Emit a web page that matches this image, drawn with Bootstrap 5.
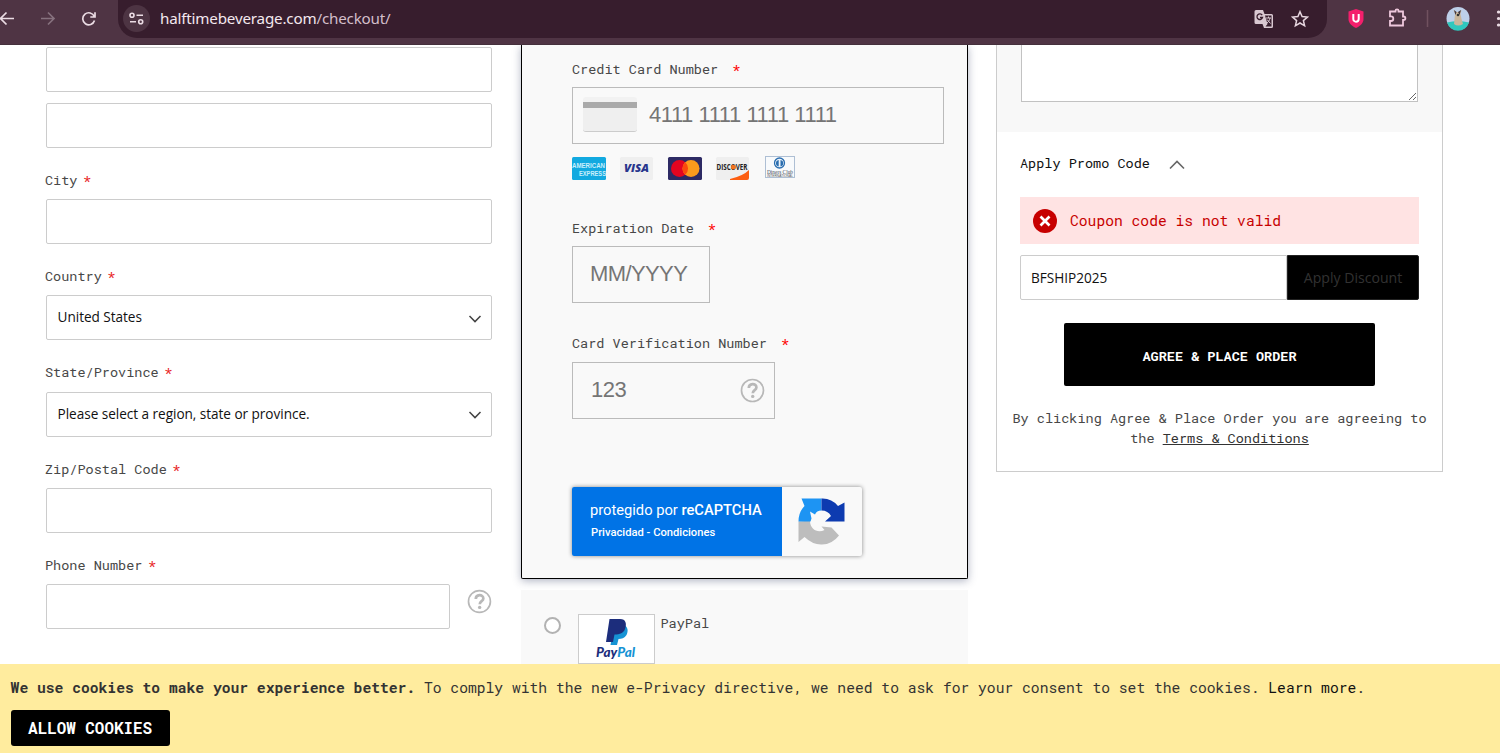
<!DOCTYPE html>
<html lang="en">
<head>
<meta charset="utf-8">
<meta name="viewport" content="width=device-width, initial-scale=1">
<title>Checkout</title>
<link href="https://cdn.jsdelivr.net/npm/bootstrap@5.3.0/dist/css/bootstrap.min.css" rel="stylesheet">
<style>
:root { --mono: "Roboto Mono", "DejaVu Sans Mono", "Liberation Mono", monospace; --sans: "Open Sans", "Noto Sans", sans-serif; }
body { font: 13.54px/20px var(--mono); color: #484848; background: #fff; height: 753px; overflow: hidden; }
.chrome { height: 45px; background: #4f3444; border-bottom: 1px solid #45303c; padding-bottom: 7px; color: #ecdde5; }
.omnibox { position: relative; width: 1209px; height: 38px; margin-left: 21px; background: #371d2d; border-radius: 0 0 19px 19px; padding-left: 5px; }
.site-info { width: 27px; height: 27px; border-radius: 50%; background: #4d3443; }
.address { font: 15.2px/20px "Noto Sans", sans-serif; letter-spacing: -.19px; color: #f3e8ee; margin-left: 10px; padding-bottom: 1px; }
.address span { color: #d3bfca; }
.page { height: 708px; display: grid; grid-template-columns: 447px 447px 447px; column-gap: 28.5px; padding-left: 45px; overflow: hidden; align-items: start; }
.form-control, .form-select { height: 45px; border: 1px solid #ccc; border-radius: 2px; font: 13.6px/20px var(--sans); color: #111; padding: 0 11px; }
.form-select { background-size: 14px 14px; background-position: right 9px center; padding-bottom: 1px; letter-spacing: -.04px;
  background-image: url("data:image/svg+xml,%3csvg xmlns='http://www.w3.org/2000/svg' viewBox='0 0 14 14'%3e%3cpath fill='none' stroke='%23444' stroke-width='1.5' d='m1.5 5 5.5 5.6L12.5 5'/%3e%3c/svg%3e"); }
.address-form .form-control, .address-form .form-select { margin-left: .6px; width: 446px; }
.field { padding-top: 22px; }
.form-label { display: block; margin: 0 0 8px; height: 20px; }
.address-form .form-label { margin-bottom: 9.25px; }
.req { color: #e8251f; margin-left: 5.500px; }
.pay .req { margin-left: 14px; color: #f00; }
.pay { background: #f9f9f9; border: 1px solid #000; border-top: 0; border-radius: 0 0 2px 2px; height: 534px; padding: 13.500px 23px 0 50.5px; box-shadow: 0 2px 9px rgba(50,60,100,.38); }
.pay .form-label { margin-bottom: 8.500px; }
.pay .form-control, .cardbox { height: 57px; border: 1px solid #bbb; border-radius: 0; background: #f9f9f9; font: 22px/28px "Liberation Sans", Arial, sans-serif; color: #777; letter-spacing: -.6px; }
.pay .form-control { padding-bottom: 1px; }
.form-control::placeholder { color: #757575; opacity: 1; }
.cardbox input { all: unset; font: 22px/28px "Liberation Sans", Arial, sans-serif; width: 270px; margin-left: 12px; letter-spacing: -.45px; padding-bottom: 1px; }
.cardart { width: 54px; height: 35px; margin-top: -3px; border-radius: 3px; background: linear-gradient(#f2f2f2 5px, #aaa 5px, #aaa 11px, #efefef 11px); border-bottom: 1px solid #ccc; }
.captcha { width: 290px; height: 69px; margin-top: 68px; background: #f9f9f9; box-shadow: 0 0 4px #888; font-family: Roboto, sans-serif; border-radius: 2px; overflow: hidden; }
.captcha-text { width: 210px; background: #0073e6; color: #fff; padding: 13px 0 0 18px; }
.paypal { background: #f9f9f9; height: 90px; margin-top: 11px; padding: 24px 0 0 23px; }
.paypal .form-check-input { width: 17px; height: 17px; margin: 3px 17px 0 1px; border: 2px solid #b2b2b2; }
.logo-tile { width: 77px; height: 50px; border: 1px solid #ccc; background: #fff; }
.summary { border: 1px solid #ccc; border-top: 0; height: 427px; }
.comments { background: #f8f8f8; height: 87px; padding: 0 24px; }
.comments textarea { height: 57px; min-height: 0; border-top: 0; border-radius: 0; border-color: #c2c2c2; resize: vertical; }
.error-note { height: 47px; background: #ffe3e3; color: #c70000; font-size: 14.67px; margin-top: 24px; padding-left: 12px; }
.promo .btn { width: 132px; background: #000; color: #323232; border-radius: 0 2px 2px 0; font: 14.1px/20px var(--sans); opacity: 1; border: 1px solid #222; padding: 0; }
.place { width: 311px; height: 63px; margin: 23px auto 0; background: #000; color: #fff; border-radius: 2px; font: bold 13.52px/20px var(--mono); display: block; border: 0; padding-top: 4px; }
.cookies { height: 89px; background: #ffec9e; padding: 14px 10px 0 10.600px; font-size: 14.66px; color: #333; }
.allow { width: 159px; height: 36px; margin-top: 12px; padding: 0; background: #000; color: #fff; border-radius: 3px; font: bold 15.9px/20px var(--mono); border: 0; }
</style>
</head>
<body>
<header class="chrome d-flex align-items-center">
  <svg width="97" height="38" fill="none" stroke="#ebdce4" stroke-width="1.700"><path d="M14 18.500H1M6.500 12.500l-6 6 6 6"/><path stroke="#86717e" d="M41 18.500h13M48 12.500l6 6-6 6"/><path d="M94.300 16.500a6 6 0 1 0 .2 4M95 12.300v4.700h-4.700"/></svg>
  <div class="omnibox d-flex align-items-center">
    <div class="site-info d-flex align-items-center justify-content-center flex-shrink-0"><svg width="15" height="13" fill="none" stroke="#ebdce4" stroke-width="1.600"><circle cx="3" cy="3.300" r="2"/><path d="M7.500 3.300H14M1 9.700h6"/><circle cx="11.700" cy="9.700" r="2"/></svg></div>
    <div class="address flex-grow-1">halftimebeverage.com<span>/checkout/</span></div>
    <svg style="margin-right:17px" width="20" height="20" viewBox="0 0 20 20"><path fill="#d9c8d1" d="M2 1h7l1.500 4h7A1.500 1.500 0 0 1 19 6.500v11a1.500 1.500 0 0 1-1.500 1.500H10l-1.500-4H2A1.500 1.500 0 0 1 .5 13.500v-11A1.500 1.500 0 0 1 2 1z"/><path fill="#371d2d" d="M11 6.500h6.500v11h-6l2-2.500z"/><path d="M8.200 6.200a2.800 2.800 0 1 0 .3 2.300H6" fill="none" stroke="#371d2d" stroke-width="1.300"/><path d="M12 9h5M14.500 7.500V9M16 9c-.5 2.500-1.700 4-3 5M13 10.500l3.500 4" fill="none" stroke="#d9c8d1"/></svg>
    <svg style="margin-right:18px" width="18" height="18" viewBox="0 0 18 18"><path d="m9 1.700 2.100 4.900 5.300.5-4 3.500 1.200 5.200L9 13l-4.600 2.800 1.200-5.200-4-3.500 5.300-.5z" fill="none" stroke="#e6d6df" stroke-width="1.500"/></svg>
  </div>
  <svg width="173" height="38"><path fill="#f41f6c" d="m29 9 7.500 2.500v7.500c0 4-3 7-7.500 9-4.500-2-7.500-5-7.500-9v-7.500z"/><path d="M26.300 14v5a2.700 2.700 0 0 0 5.400 0v-5" fill="none" stroke="#fff" stroke-width="2"/><path d="M63 11.500h5.500V10.800a1.500 1.500 0 0 1 3 0v.7H76v5h.7a1.500 1.500 0 0 1 0 3.400H76v5.600H63V21h1a2.300 2.300 0 0 0 0-4.600h-1z" fill="none" stroke="#efc8dd" stroke-width="1.800"/><path stroke="#70515f" stroke-width="1.500" d="M100.500 10v17"/><circle cx="131" cy="18.500" r="11.500" fill="#bdcfe9"/><path d="M120 22.500q11-3 22 0a11.500 11.500 0 0 1-22 0z" fill="#2fc7bd"/><path d="M127 24l1-10-1.500-4 3 2h2l3-2-1 4 1 5 1.500 5q-5 3-9 0z" fill="#c9b69b"/><path d="m127 10 2.500 2-1 3zm7 0-3 2 1.500 3z" fill="#3e3540"/><circle cx="131" cy="15" r="1.300" fill="#333"/><circle cx="171.500" cy="12" r="1.600" fill="#ebdce4"/><circle cx="171.500" cy="18.500" r="1.600" fill="#ebdce4"/><circle cx="171.500" cy="25" r="1.600" fill="#ebdce4"/></svg>
</header>

<main class="page">
  <form class="address-form">
    <div style="padding-top:2px"><input class="form-control" aria-label="Street address line 1"></div>
    <div style="padding-top:10.75px"><input class="form-control" aria-label="Street address line 2"></div>
    <div class="field"><label class="form-label">City<span class="req">*</span></label><input class="form-control" aria-label="City"></div>
    <div class="field"><label class="form-label">Country<span class="req">*</span></label><select class="form-select" aria-label="Country"><option>United States</option></select></div>
    <div class="field"><label class="form-label">State/Province<span class="req">*</span></label><select class="form-select" aria-label="State"><option>Please select a region, state or province.</option></select></div>
    <div class="field"><label class="form-label">Zip/Postal Code<span class="req">*</span></label><input class="form-control" aria-label="Zip"></div>
    <div class="field"><label class="form-label">Phone Number<span class="req">*</span></label>
      <div class="d-flex"><input class="form-control" style="width:406px" aria-label="Phone"><svg style="margin:5px 0 0 17px" width="25" height="25" viewBox="0 0 25 25"><circle cx="12.500" cy="12.500" r="11" fill="none" stroke="#b8b8b8" stroke-width="1.700"/><path d="M8.800 10c0-5 7.600-5 7.600-.6 0 2.800-3.600 2.700-3.600 5.800" fill="none" stroke="#b8b8b8" stroke-width="2.700"/><circle cx="12.700" cy="18.400" r="1.700" fill="#b8b8b8"/></svg></div>
    </div>
  </form>

  <section>
    <div class="pay">
      <label class="form-label">Credit Card Number<span class="req">*</span></label>
      <div class="cardbox d-flex align-items-center" style="padding-left:10px"><div class="cardart"></div><input placeholder="4111 1111 1111 1111" aria-label="Credit card number"></div>
      <svg class="d-block" style="margin-top:11px" width="230" height="27">
        <rect x="0" y="2" width="34" height="23" rx="1.500" fill="#12a9e0"/><text x="0" y="12.500" font-family="Liberation Sans" font-weight="bold" font-size="6.500" textLength="33" lengthAdjust="spacingAndGlyphs" fill="#c9effc">AMERICAN</text><text x="7" y="20.500" font-family="Liberation Sans" font-weight="bold" font-size="6.500" textLength="27" lengthAdjust="spacingAndGlyphs" fill="#c9effc">EXPRESS</text>
        <rect x="48" y="2" width="33" height="23" rx="1.500" fill="#efefef"/><text x="52" y="17" font-family="Open Sans" font-style="italic" font-weight="800" font-size="11" textLength="25" lengthAdjust="spacingAndGlyphs" fill="#26358c">VISA</text>
        <rect x="96" y="2" width="34" height="23" rx="1.500" fill="#2d2a64"/><circle cx="107.500" cy="13.500" r="8.500" fill="#e40520"/><circle cx="119" cy="13.500" r="8.500" fill="#fc9b1c"/><path d="M113.250 7.200a8.500 8.500 0 0 1 0 12.600 8.500 8.500 0 0 1 0-12.600" fill="#fb4a0c"/>
        <rect x="144" y="2" width="33" height="23" rx="1.500" fill="#efefef"/><path d="M158 24q13-3 19-9v8q0 2-2 2h-17z" fill="#fc5e11"/><text x="144.500" y="15" font-family="Open Sans" font-weight="bold" font-size="8" textLength="31" lengthAdjust="spacingAndGlyphs" fill="#222">DISCOVER</text><circle cx="161.500" cy="12.200" r="2.400" fill="#f4731e"/>
        <rect x="193.500" y="1.500" width="29" height="21" fill="#f8fafc" stroke="#aebfd4"/><circle cx="207.500" cy="8" r="5" fill="#eef4fa" stroke="#2a6eb0" stroke-width="1.300"/><path d="M206.700 5v6.500a3.300 3.300 0 0 1 0-6.500m1.800 0v6.500a3.300 3.300 0 0 0 0-6.500" fill="#2a6eb0"/><text x="195" y="18.500" font-family="Liberation Serif" font-size="6.500" textLength="26" lengthAdjust="spacingAndGlyphs" fill="#454b5a">Diners Club</text><text x="195" y="21.800" font-family="Liberation Sans" font-size="3" textLength="26" lengthAdjust="spacingAndGlyphs" fill="#555">INTERNATIONAL</text>
      </svg>
      <label class="form-label" style="margin-top:35.500px">Expiration Date<span class="req">*</span></label>
      <input class="form-control" style="width:138px;padding-left:17px;margin-top:-.5px" placeholder="MM/YYYY" aria-label="Expiration date">
      <label class="form-label" style="margin-top:30.500px">Card Verification Number<span class="req">*</span></label>
      <div class="cardbox d-flex align-items-center" style="width:203px;padding-left:6px"><input style="width:137px" placeholder="123" aria-label="CVV"><svg style="margin-left:11.500px" width="25" height="25" viewBox="0 0 25 25"><circle cx="12.500" cy="12.500" r="11" fill="none" stroke="#b8b8b8" stroke-width="1.700"/><path d="M8.800 10c0-5 7.600-5 7.600-.6 0 2.800-3.600 2.700-3.600 5.800" fill="none" stroke="#b8b8b8" stroke-width="2.700"/><circle cx="12.700" cy="18.400" r="1.700" fill="#b8b8b8"/></svg></div>
      <div class="captcha d-flex">
        <div class="captcha-text"><div style="font-size:14.700px;line-height:21px">protegido por <span style="font-weight:500">reCAPTCHA</span></div><div style="font-size:11.200px;line-height:24px;padding-left:1px;font-weight:500">Privacidad - Condiciones</div></div>
        <svg width="80" height="69"><path fill="#bdbdbd" d="M16.500 34.500l6-.5h5.500c0 8.500 8 12.500 14.500 9l-3-3.500 10 1 7.500 8q-7 9-17 9-9 .5-17.500-7.500l-6 5z"/><path fill="#1d94f3" d="M39.500 11.500v12q-5 0-6.500 4l-5-3 1.500 7-1 3H16.500q0-9.500 6-15.500l-3-7.500z"/><path fill="#0d3bb0" d="M39.500 11.500q10-.5 16.500 7.500l6.500-3.500v19H43l6-5.500q-3-5.500-9.500-5.500z"/></svg>
      </div>
    </div>
    <div class="paypal d-flex">
      <input class="form-check-input flex-shrink-0" style="margin-left:0" type="radio" name="pay" aria-label="PayPal">
      <div class="logo-tile"><svg width="75" height="48"><path fill="#1693d4" d="M35 10h10c4 2 4.500 6 2.500 10-2 3-5 4-8 4l-1.500 6h-6.500z"/><path fill="#1c2d7c" d="M30.500 4H41c6 0 7 5 5 10-1.500 4-5 5.500-10.500 5.500L34 27h-7z"/><text x="17" y="42" font-family="Lato" font-weight="900" font-style="italic" font-size="12.500" textLength="39" lengthAdjust="spacingAndGlyphs" fill="#1c2d7c">Pay<tspan fill="#1693d4">Pal</tspan></text></svg></div>
      <div style="margin:-1px 0 0 6px">PayPal</div>
    </div>
  </section>

  <aside class="summary">
    <div class="comments"><textarea class="form-control" aria-label="Order comments"></textarea></div>
    <div class="promo" style="padding:21px 23px 0">
      <div class="d-flex align-items-center" style="color:#111">Apply Promo Code<svg style="margin:4px 0 0 19px" width="16" height="10"><path d="m1 8.500 7-7 7 7" fill="none" stroke="#666" stroke-width="1.600"/></svg></div>
      <div class="error-note d-flex align-items-center"><svg style="margin-right:12px" width="26" height="26"><circle cx="13" cy="13" r="12" fill="#c70000"/><path d="m8.500 8.500 9 9m0-9-9 9" stroke="#fff" stroke-width="2.700"/></svg>Coupon code is not valid</div>
      <div class="d-flex" style="margin-top:11.400px"><input class="form-control" style="border-radius:2px 0 0 2px;padding-left:10px" value="BFSHIP2025" aria-label="Promo code"><button class="btn flex-shrink-0" disabled>Apply Discount</button></div>
      <button class="place" style="margin-top:22.600px">AGREE &amp; PLACE ORDER</button>
    </div>
    <div class="text-center" style="margin-top:22px">By clicking Agree &amp; Place Order you are agreeing to<br>the <a href="#" style="color:#333">Terms &amp; Conditions</a></div>
  </aside>
</main>

<div class="cookies fixed-bottom">
  <div><strong>We use cookies to make your experience better.</strong> To comply with the new e-Privacy directive, we need to ask for your consent to set the cookies. <span style="color:#111">Learn more</span>.</div>
  <button class="allow">ALLOW COOKIES</button>
</div>
<script src="https://cdn.jsdelivr.net/npm/bootstrap@5.3.0/dist/js/bootstrap.bundle.min.js"></script>
</body>
</html>
